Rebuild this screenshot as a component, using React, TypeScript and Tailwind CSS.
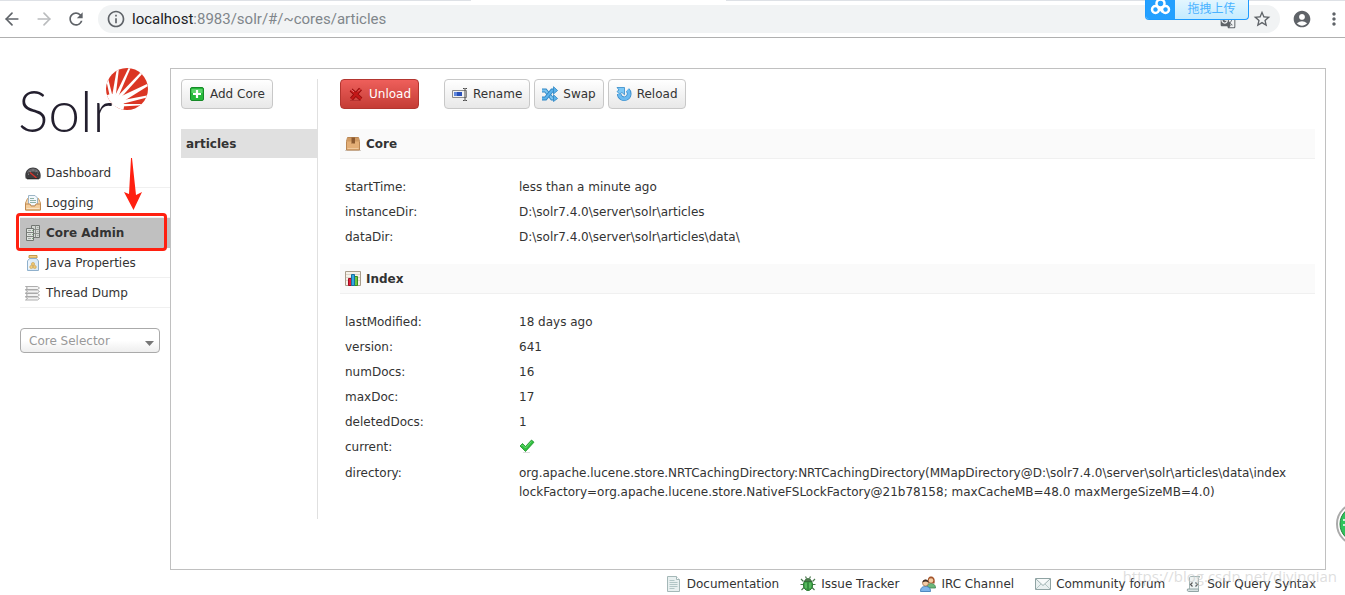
import type { ReactNode } from "react"
import { ArrowLeft, ArrowRight } from "lucide-react"
import { MdAccountCircle, MdGTranslate, MdInfoOutline, MdMoreVert, MdRefresh, MdStarBorder } from "react-icons/md"

type Row = {
    label: string
    value: ReactNode
}

/* ICONS */

function Icon({ children }: { children: ReactNode }) {
    return (
        <svg className="w-4 h-4 shrink-0" viewBox="0 0 16 16" aria-hidden="true">
            {children}
        </svg>
    )
}

const DashboardIcon = () => (
    <Icon>
        <path d="M.7 13.500C-1 7 3 2.500 8 2.500S17 7 15.300 13.500c-1 .8-13.600.8-14.600 0Z" fill="#3d3d3f" />
        <path d="M2 8C3 4.500 5.500 3.500 8 3.500S13 4.500 14 8c-3-1.600-9-1.600-12 0Z" fill="#66666a" />
        <path d="M3 9l1 .4M4.500 6l.8.8M8 4.500v1M11.500 6l-.8.8M13 9l-1 .4" stroke="#bbb" strokeWidth=".7" />
        <path d="M5 7.500 11.500 13" stroke="#d8332b" strokeWidth="1.300" />
        <path d="M2 13.800h12" stroke="#222" />
    </Icon>
)

const LoggingIcon = () => (
    <Icon>
        <path d="M.5 8 2.500 3.500h11L15.500 8v7h-15Z" fill="#f5d7ae" stroke="#c99a63" />
        <path d="M3.500.5h6.500l2.500 2.500V11h-9Z" fill="#f3f8fc" stroke="#9db5c6" />
        <path d="M5 3.500h4M5 5.500h6M5 7.500h6" stroke="#8fb2a8" />
        <path d="M.5 9H5l1 2h4l1-2h4.500v6h-15Z" fill="#f4cd9a" stroke="#c08a50" />
        <path d="M1.500 13.500h13" stroke="#fbe6c8" />
    </Icon>
)

const ServerIcon = () => (
    <Icon>
        <path d="M6.500.5h8v12h-8Z" fill="#d3d7d3" stroke="#727672" />
        <path d="M6.500 4.500h8M6.500 8.500h8M10.500.5v12" stroke="#8b8f8b" />
        <path d="M1.500 3.500h7v12h-7Z" fill="#dfe3df" stroke="#727672" />
        <path d="M1.500 7.500h7M1.500 11.500h7" stroke="#7d817d" />
        <path d="M3 5.500h3M3 9.500h3M3 13.500h3M12 2.500h1.500M12 6.500h1.500M12 10.500h1.500" stroke="#a4a8a4" />
        <path d="M7 5.500h1M7 9.500h1M7 13.500h1" stroke="#7fae80" />
    </Icon>
)

const JarIcon = () => (
    <Icon>
        <path d="M4 .5h8v2.500H4Z" fill="#f3cf83" stroke="#c69a4a" />
        <path d="M4.500 3.500h7l2 2.500v9.500h-11V6Z" fill="#dcebf7" stroke="#8fb0cc" />
        <path d="M4 5.500V14" stroke="#fff" />
        <circle cx="8" cy="9" r="1.600" fill="#efc66e" stroke="#c3943c" strokeWidth=".5" />
        <circle cx="6.300" cy="12" r="1.600" fill="#f2cd7c" stroke="#c3943c" strokeWidth=".5" />
        <circle cx="9.700" cy="12" r="1.600" fill="#efc66e" stroke="#c3943c" strokeWidth=".5" />
    </Icon>
)

const ThreadIcon = () => (
    <Icon>
        <path d="M.5 1.500h12l2 1.500-2 1.500H.5L2.500 3ZM.5 5h12l2 1.500-2 1.500H.5l2-1.500ZM.5 8.500h12l2 1.500-2 1.500H.5l2-1.500ZM.5 12h12l2 1.500-2 1.500H.5l2-1.500Z" fill="#f3f3f3" stroke="#a5a5a5" strokeWidth=".9" />
    </Icon>
)

const PlusIcon = () => (
    <Icon>
        <rect x="1.500" y="1.500" width="13" height="13" rx="1.500" fill="#25b83a" stroke="#168a27" />
        <path d="M2.500 3h11v4h-11Z" fill="#5bd36a" />
        <path d="M8 4v8M4 8h8" stroke="#fff" strokeWidth="2.200" />
    </Icon>
)

const CrossIcon = () => (
    <Icon>
        <path d="M2 14.500h11" stroke="#9c2323" strokeWidth="1" opacity=".5" />
        <path d="M3 4l10 9M12.500 3 3.500 13" stroke="#8d0c0c" strokeWidth="4" />
        <path d="M3 4l10 9M12.500 3 3.500 13" stroke="#c41818" strokeWidth="2.400" />
        <path d="M3 3.500 6 6M12 3.500 10 5.500" stroke="#ee7a7a" strokeWidth="1" />
    </Icon>
)

const RenameIcon = () => (
    <Icon>
        <path d="M.5 4.500h14v7H.5Z" fill="#f2f2f2" stroke="#8b8b8b" />
        <path d="M2 6h8v4H2Z" fill="#2950b8" />
        <path d="M2 6h3v4H2Z" fill="#5f87dd" />
        <path d="M11 2.500h1.500l.5.500.5-.5H15M13 3v11M11 14.500h1.500l.5-.5.500.500H15" fill="none" stroke="#4a4a4a" />
    </Icon>
)

const SwapIcon = () => (
    <Icon>
        <path d="M0 4.500h3.500l6.500 8h2" fill="none" stroke="#2f86c4" strokeWidth="3.800" />
        <path d="M0 4.500h3.500l6.500 8h2" fill="none" stroke="#7cc4ef" strokeWidth="2.200" />
        <path d="M0 12.500h3.500L10 4.500h2" fill="none" stroke="#2f86c4" strokeWidth="3.800" />
        <path d="M0 12.500h3.500L10 4.500h2" fill="none" stroke="#5cb2ea" strokeWidth="2.200" />
        <path d="M11.500.7 15.600 4.500l-4.100 3.500ZM11.500 8.700l4.100 3.800-4.100 3Z" fill="#5cb2ea" stroke="#2f86c4" strokeWidth=".8" />
    </Icon>
)

const ReloadIcon = () => (
    <Icon>
        <path d="M11.500 4A5 5 0 1 1 3.200 8" fill="none" stroke="#3489c8" strokeWidth="4.600" />
        <path d="M11.500 4A5 5 0 1 1 3.200 8" fill="none" stroke="#6bbaf0" strokeWidth="3.200" />
        <path d="M1 1.500h7.500v7.300L6 6.500 3.500 8 1 5.500l2-1.500Z" fill="#7dc8f5" stroke="#3489c8" strokeWidth=".8" />
    </Icon>
)

const BoxIcon = () => (
    <Icon>
        <path d="M0 14.500h16" stroke="#d2cdc8" />
        <path d="M2.500 1.500h11l1 4v8.500h-13V5.500Z" fill="#e3ae76" stroke="#b98653" />
        <path d="M2.500 2h11l.8 3.500H1.700Z" fill="#d09a62" />
        <path d="M6.500 1.500h3.500V8l-1-1-1 1-.7-1-.8 1Z" fill="#8c5a30" />
        <path d="M2.500 12.500h11" stroke="#f0c99c" />
    </Icon>
)

const ChartIcon = () => (
    <Icon>
        <path d="M.5.5h15v14H.5Z" fill="#f5f1e9" stroke="#a99d8b" />
        <path d="M1 3.500h14M1 6.500h14M1 9.500h14" stroke="#ddd5c7" />
        <path d="M3.500 7.500h3v7h-3Z" fill="#e0203a" stroke="#a20c20" />
        <path d="M9.500 5.500h3v9h-3Z" fill="#6cc644" stroke="#398d1e" />
        <path d="M6.500 3.500h3v11h-3Z" fill="#35a8e0" stroke="#156f9f" />
    </Icon>
)

const TickIcon = () => (
    <Icon>
        <path d="M4 14.500h7" stroke="#ddd" />
        <path d="M1 8 3.500 5.500 6.500 8.500 12.500 2 15 4.200 6.500 13.500Z" fill="#2fbf3e" stroke="#1d8f2b" strokeWidth=".8" />
        <path d="M2.500 8 3.500 7l3 3L12.500 3.500" fill="none" stroke="#7be184" strokeWidth=".8" />
    </Icon>
)

const DocumentIcon = () => (
    <Icon>
        <path d="M1.500.5h9l3 3v12h-12Z" fill="#e8f0f0" stroke="#a5b8b8" />
        <path d="M10.500.5v3h3" fill="#fff" stroke="#a5b8b8" />
        <path d="M3.500 4.500h5M3.500 6.500h8M3.500 8.500h8M3.500 10.500h8M3.500 12.500h5" stroke="#b2c6c6" />
    </Icon>
)

const BugIcon = () => (
    <Icon>
        <path d="M1 3l2.500 2.500M15 3l-2.500 2.500M.5 8.500h3.500M15.500 8.500H12M1.500 14 4.500 11M14.500 14l-3-3M5.500.5l1 2M10.500.5l-1 2" fill="none" stroke="#4a7a4d" strokeWidth="1.200" />
        <ellipse cx="8" cy="9" rx="4.600" ry="5.500" fill="#3fa548" stroke="#2c7a33" />
        <path d="M4.500 5.500C5 1.500 11 1.500 11.500 5.500Z" fill="#4c7e4c" stroke="#2d5b30" strokeWidth=".7" />
        <path d="M8 5.500V14" stroke="#2c7a33" />
        <path d="M6 7v5M10 7v5" stroke="#72ca74" />
    </Icon>
)

const PeopleIcon = () => (
    <Icon>
        <path d="M7 12c0-3.500 2-4.500 4-4.500s4.500 1 4.500 4.500Z" fill="#6cb77a" stroke="#3f8750" strokeWidth=".8" />
        <path d="M8 7c-1-5 1-6.500 3-6.500s4.500 1.500 3.500 7Z" fill="#a4542b" />
        <circle cx="11" cy="4.500" r="2.300" fill="#f4cda5" />
        <path d="M.5 15.500c0-4 2-5 5-5s5 1 5 5Z" fill="#7db5ea" stroke="#3473b4" strokeWidth=".8" />
        <circle cx="5.500" cy="7" r="3" fill="#f4cda5" stroke="#8b572f" strokeWidth=".6" />
        <path d="M2.500 6.500C2.500 2.500 8.500 2.500 8.500 6.500 7 5.500 5 5 2.500 6.500Z" fill="#3a2a22" />
    </Icon>
)

const MailIcon = () => (
    <Icon>
        <path d="M.5 2.500h15v11H.5Z" fill="#e9f0f0" stroke="#8fa3a3" />
        <path d="M1 13 6 8M15 13l-5-5" stroke="#b4c5c5" />
        <path d="m1 3 7 6.500L15 3" fill="#f7fafa" stroke="#9db0b0" />
    </Icon>
)

const ScriptIcon = () => (
    <Icon>
        <path d="M3.500 13V2c0-1 .5-1.500 1.500-1.500h9c-1 .5-1.500 1.500-1.500 2.500v10" fill="#eef3f3" stroke="#a3b5b5" />
        <path d="M1.500 13h11v2.500h-10c-1 0-1.500-1-1-2.500Z" fill="#d7e2e2" stroke="#93a5a5" />
        <path d="M6.500 6.500 4.500 8.500l2 2M9.500 6.500l2 2-2 2" fill="none" stroke="#555" strokeWidth="1.200" />
    </Icon>
)

const SolrLogo = () => (
    <svg className="w-32 h-17 overflow-visible" viewBox="0 0 128 68" role="img" aria-label="Solr">
        <defs>
            <clipPath id="sun">
                <circle cx="107" cy="21" r="21" />
            </clipPath>
        </defs>
        <text x="-2" y="64" fontFamily="Lato, sans-serif" fontWeight="300" fontSize="57" fill="#231f2e">Solr</text>
        <g clipPath="url(#sun)">
            <rect x="86" width="42" height="42" fill="#db3624" />
            <g fill="#fff">
                <path d="M91 34 86 11l2-1L94 34Z" />
                <path d="M91 34 97 0h2L95 34Z" />
                <path d="M92 34 109-1h2L96 34Z" />
                <path d="M92 34 121 4l2 1L96 35Z" />
                <path d="m93 32 34-16 1 2-32 20Z" />
                <path d="m93 34 36-7v2L94 38Z" />
                <path d="m93 36 34 0v1L93 39Z" />
                <circle cx="92" cy="38" r="12" />
            </g>
        </g>
    </svg>
)

/* DATA */

const menu = [
    { label: "Dashboard", icon: <DashboardIcon /> },
    { label: "Logging", icon: <LoggingIcon /> },
    { label: "Core Admin", icon: <ServerIcon />, active: true },
    { label: "Java Properties", icon: <JarIcon /> },
    { label: "Thread Dump", icon: <ThreadIcon /> },
]

const coreRows: Row[] = [
    { label: "startTime:", value: "less than a minute ago" },
    { label: "instanceDir:", value: "D:\\solr7.4.0\\server\\solr\\articles" },
    { label: "dataDir:", value: "D:\\solr7.4.0\\server\\solr\\articles\\data\\" },
]

const indexRows: Row[] = [
    { label: "lastModified:", value: "18 days ago" },
    { label: "version:", value: "641" },
    { label: "numDocs:", value: "16" },
    { label: "maxDoc:", value: "17" },
    { label: "deletedDocs:", value: "1" },
    { label: "current:", value: <span className="flex h-5" title="true"><TickIcon /></span> },
    {
        label: "directory:",
        value: "org.apache.lucene.store.NRTCachingDirectory:NRTCachingDirectory(MMapDirectory@D:\\solr7.4.0\\server\\solr\\articles\\data\\index lockFactory=org.apache.lucene.store.NativeFSLockFactory@21b78158; maxCacheMB=48.0 maxMergeSizeMB=4.0)",
    },
]

const footerLinks = [
    { label: "Documentation", icon: <DocumentIcon /> },
    { label: "Issue Tracker", icon: <BugIcon /> },
    { label: "IRC Channel", icon: <PeopleIcon /> },
    { label: "Community forum", icon: <MailIcon /> },
    { label: "Solr Query Syntax", icon: <ScriptIcon /> },
]

/* PARTS */

function BrowserBar() {
    return (
        <header className="relative flex items-center h-[38px] border-b border-[#b0b0b0] bg-white text-[#5f6368]">
            <div className="absolute inset-x-0 top-0 flex h-px">
                <div className="w-[35%] bg-[#dee1e6]" />
                <div className="w-[19%]" />
                <div className="flex-1 bg-[#dee1e6]" />
            </div>
            <div className="flex items-center gap-3 pl-[2px] pr-3">
                <button aria-label="Back"><ArrowLeft className="w-5 h-5" /></button>
                <button aria-label="Forward" className="text-[#babcbe]"><ArrowRight className="w-5 h-5" /></button>
                <button aria-label="Reload page"><MdRefresh className="w-5 h-5" /></button>
            </div>
            <div className="flex flex-1 items-center h-7 rounded-full bg-[#f1f3f4] px-2">
                <MdInfoOutline className="w-5 h-5 shrink-0" />
                <div role="textbox" aria-label="Address" className="flex-1 pl-[6px] font-[Roboto,sans-serif] text-[15px] leading-5 text-[#80868b]">
                    <span className="text-[#202124]">localhost</span>:8983/solr/#/~cores/articles
                </div>
                <button aria-label="Translate" className="mr-4 mt-1"><MdGTranslate className="w-4 h-4" /></button>
                <button aria-label="Bookmark"><MdStarBorder className="w-5 h-5" /></button>
            </div>
            <button aria-label="Profile" className="ml-3"><MdAccountCircle className="w-5 h-5" /></button>
            <button aria-label="Menu" className="ml-3 mr-px"><MdMoreVert className="w-5 h-5" /></button>

            {/* Drag and drop upload tab */}
            <div className="absolute top-0 right-24 flex h-5 w-26 overflow-hidden rounded-b border border-t-0 border-[#1e9bff] bg-linear-to-b from-[#e3f6ff] to-[#c4ebff]">
                <svg className="w-[29px] h-5 bg-[#24a0ff]" viewBox="0 0 29 20" fill="none" stroke="#fff" strokeWidth="2.500" aria-hidden="true">
                    <circle cx="14.500" cy="3.500" r="4" />
                    <circle cx="9.500" cy="9.500" r="3.500" />
                    <circle cx="19.500" cy="9.500" r="3.500" />
                    <path d="m12 7 5 5" />
                </svg>
                <span className="flex-1 text-center font-['Noto_Sans_CJK_SC',sans-serif] text-xs leading-4 text-[#4ab2ff]">拖拽上传</span>
            </div>
        </header>
    )
}

function Sidebar() {
    return (
        <aside className="w-[150px] shrink-0">
            <SolrLogo />
            <nav className="relative mt-[22px]">
                <ul>
                    {menu.map(item => (
                        <li key={item.label} className={item.active ? "border-b border-[#c0c0c0]" : "border-b border-[#f0f0f0]"}>
                            <a
                                href="#"
                                className={`flex h-[29px] items-center gap-[5px] pl-[5px] ${item.active ? "bg-[#c0c0c0] font-bold" : ""}`}
                            >
                                {item.icon}
                                {item.label}
                            </a>
                        </li>
                    ))}
                </ul>
                {/* Highlight box and arrow over the active entry */}
                <div className="absolute -left-1 top-[55px] h-[38px] w-[151px] rounded-sm border-3 border-[#ff2010]" />
                <svg className="absolute left-[103px] top-0 w-5 h-[54px]" viewBox="0 0 20 54" aria-hidden="true">
                    <path d="M8 0h1l4 37 6-3-8.500 18L1 34l5 2Z" fill="#ff2010" />
                </svg>
            </nav>
            <div className="relative mt-5 w-[140px]">
                <select
                    aria-label="Core Selector"
                    className="block h-[25px] w-full appearance-none rounded border border-[#aaa] bg-linear-to-b from-white from-50% to-[#eee] px-2 text-[#999]"
                >
                    <option>Core Selector</option>
                </select>
                <svg className="pointer-events-none absolute right-1.5 top-[13px] w-[9px] h-[5px]" viewBox="0 0 9 5" aria-hidden="true">
                    <path d="M0 0h9L4.500 5Z" fill="#777" />
                </svg>
            </div>
        </aside>
    )
}

function ActionButton({ icon, children }: { icon: ReactNode, children: ReactNode }) {
    return (
        <button className="flex h-[30px] items-center gap-[5px] rounded border border-[#c8c8c8] bg-linear-to-b from-white to-[#e8e8e8] px-[7px] whitespace-nowrap">
            {icon}
            {children}
        </button>
    )
}

function Section({ title, icon, rows }: { title: string, icon: ReactNode, rows: Row[] }) {
    return (
        <section>
            <h2 className="flex h-[30px] items-center gap-[5px] border-b border-[#f0f0f0] bg-[#fafafa] pl-[5px] font-bold">
                {icon}
                {title}
            </h2>
            <table className="mt-4 mb-[14px] ml-[5px] text-left">
                <tbody>
                    {rows.map(row => (
                        <tr key={row.label} className="align-top leading-[19px]">
                            <th scope="row" className="w-[174px] min-w-[174px] py-[3px] font-normal">{row.label}</th>
                            <td className="py-[3px] pr-2">{row.value}</td>
                        </tr>
                    ))}
                </tbody>
            </table>
        </section>
    )
}

export default function App() {
    return (
        <div className="relative min-h-screen overflow-hidden bg-white font-['DejaVu_Sans',Verdana,sans-serif] text-xs text-[#333]">
            <BrowserBar />

            <div className="flex pl-5 pr-[19px] pt-[30px]">
                <Sidebar />

                <main className="flex min-w-0 flex-1 border border-[#c0c0c0] px-[10px] pt-[10px] pb-[50px]">
                    {/* Core list */}
                    <div className="w-[137px] shrink-0 border-r border-[#e0e0e0]">
                        <div className="flex">
                            <ActionButton icon={<PlusIcon />}>Add Core</ActionButton>
                        </div>
                        <a href="#" className="mt-5 block bg-[#e0e0e0] pt-px pl-[5px] leading-[28px] font-bold">articles</a>
                    </div>

                    {/* Core details */}
                    <div className="ml-[22px] min-w-0 flex-1">
                        <div className="mb-5 flex">
                            <button className="mr-[25px] flex h-[30px] items-center gap-[5px] rounded border border-[#b33630] bg-linear-to-b from-[#ee5f5b] to-[#c43c35] px-[7px] text-white">
                                <CrossIcon />
                                Unload
                            </button>
                            <div className="flex gap-1">
                                <ActionButton icon={<RenameIcon />}>Rename</ActionButton>
                                <ActionButton icon={<SwapIcon />}>Swap</ActionButton>
                                <ActionButton icon={<ReloadIcon />}>Reload</ActionButton>
                            </div>
                        </div>
                        <Section title="Core" icon={<BoxIcon />} rows={coreRows} />
                        <Section title="Index" icon={<ChartIcon />} rows={indexRows} />
                    </div>
                </main>
            </div>

            <footer className="flex justify-end gap-[21px] pr-[29px] pt-1">
                {footerLinks.map(link => (
                    <a key={link.label} href="#" className="flex h-5 items-center gap-[5px] whitespace-nowrap">
                        {link.icon}
                        {link.label}
                    </a>
                ))}
            </footer>

            {/* Watermark */}
            <div className="pointer-events-none absolute right-2 top-[566px] font-['Open_Sans',sans-serif] text-[15px] leading-5 text-[#c8c8c8]/60">
                https://blog.csdn.net/diyinqian
            </div>

            {/* Floating helper bubble, cut by the window edge */}
            <svg className="absolute right-0 top-[497px] w-3 h-[54px]" viewBox="0 0 12 54" aria-hidden="true">
                <circle cx="25" cy="27" r="21" fill="#fff" stroke="#aaa" strokeWidth="2" />
                <circle cx="25" cy="27" r="18" fill="#2fc45c" stroke="#28803f" />
                <path d="M10 23h2M10 28h2" stroke="#fff" strokeWidth="1.500" />
            </svg>
        </div>
    )
}
